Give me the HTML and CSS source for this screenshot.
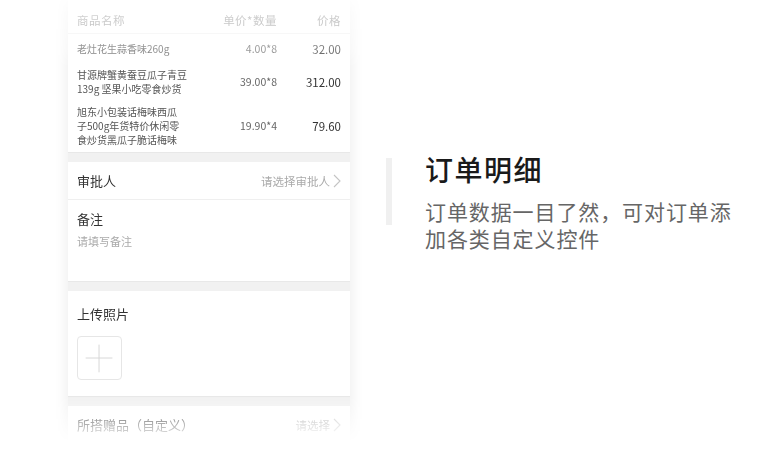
FILE: index.html
```html
<!DOCTYPE html>
<html lang="zh-CN">
<head>
<meta charset="utf-8">
<title>订单明细</title>
<link rel="stylesheet" href="styles.css">
</head>
<body>
<main class="page">
  <div class="mock">
    <div class="phone">
      <section class="card goods">
        <div class="grow head">
          <span class="c-name">商品名称</span>
          <span class="c-unit">单价*数量</span>
          <span class="c-price">价格</span>
        </div>
        <div class="grow item first">
          <span class="c-name">老灶花生蒜香味260g</span>
          <span class="c-unit">4.00*8</span>
          <span class="c-price">32.00</span>
        </div>
        <div class="grow item">
          <span class="c-name">甘源牌蟹黄蚕豆瓜子青豆<br>139g 坚果小吃零食炒货</span>
          <span class="c-unit">39.00*8</span>
          <span class="c-price">312.00</span>
        </div>
        <div class="grow item last">
          <span class="c-name">旭东小包装话梅味西瓜<br>子500g年货特价休闲零<br>食炒货黑瓜子脆话梅味</span>
          <span class="c-unit">19.90*4</span>
          <span class="c-price">79.60</span>
        </div>
      </section>
      <div class="gap"></div>
      <section class="card">
        <div class="line-row">
          <span class="label">审批人</span>
          <span class="pick">请选择审批人<svg class="chev" viewBox="0 0 8 14" width="8" height="14"><polyline points="1,1 7,7 1,13" fill="none" stroke="#c4c4c4" stroke-width="1.1"/></svg></span>
        </div>
        <div class="remark">
          <div class="label">备注</div>
          <div class="hint">请填写备注</div>
        </div>
      </section>
      <div class="gap"></div>
      <section class="card upload">
        <div class="label">上传照片</div>
        <div class="addbox">
          <svg viewBox="0 0 45 44" width="45" height="44"><line x1="8" y1="22" x2="36" y2="22" stroke="#d6d6d6" stroke-width="1"/><line x1="22" y1="8" x2="22" y2="37" stroke="#d6d6d6" stroke-width="1"/></svg>
        </div>
      </section>
      <div class="gap"></div>
      <section class="card">
        <div class="line-row">
          <span class="label">所搭赠品（自定义）</span>
          <span class="pick">请选择<svg class="chev" viewBox="0 0 8 14" width="8" height="14"><polyline points="1,1 7,7 1,13" fill="none" stroke="#c4c4c4" stroke-width="1.1"/></svg></span>
        </div>
        <div class="filler"></div>
      </section>
    </div>
  </div>
  <div class="intro">
    <div class="bar"></div>
    <div class="texts">
      <h1 class="title">订单明细</h1>
      <p class="desc"><span class="dl">订单数据一目了然，可对订单添</span><span class="dl">加各类自定义控件</span></p>
    </div>
  </div>
</main>
</body>
</html>
```

FILE: styles.css
```css
* { box-sizing: border-box; }
html, body {
  margin: 0;
  padding: 0;
  background: #fff;
}
body {
  font-family: "Noto Sans CJK SC", "Noto Sans", sans-serif;
  color: #333;
  width: 770px;
  height: 454px;
  overflow: hidden;
}
.page {
  display: flex;
  align-items: flex-start;
  height: 454px;
}
.mock {
  margin-left: 50px;
  padding: 0 18px;
  height: 454px;
  overflow: hidden;
  -webkit-mask-image: linear-gradient(to bottom, rgba(0,0,0,.25) 0, rgba(0,0,0,.45) 22px, rgba(0,0,0,.65) 50px, #000 68px, #000 396px, rgba(0,0,0,0) 442px);
  mask-image: linear-gradient(to bottom, rgba(0,0,0,.25) 0, rgba(0,0,0,.45) 22px, rgba(0,0,0,.65) 50px, #000 68px, #000 396px, rgba(0,0,0,0) 442px);
}
.phone {
  width: 282px;
  background: #f2f2f2;
  box-shadow: 0 0 14px rgba(0,0,0,.09);
}
.card {
  background: #fff;
}
.gap {
  height: 10px;
  background: #f1f1f1;
  border-top: 1px solid #e8e8e8;
}

/* goods table */
.grow {
  display: grid;
  grid-template-columns: 1fr 80px 64px;
  align-items: center;
  padding: 0 9px;
}
.grow .c-unit, .grow .c-price { text-align: right; white-space: nowrap; }
.head {
  height: 34px;
  padding-top: 6px;
  border-bottom: 1px solid #f0f0f0;
  font-size: 11.5px;
  color: #888;
  letter-spacing: .5px;
}
.item {
  padding-top: 4px;
  padding-bottom: 4px;
  line-height: 14px;
}
.item.first { padding-top: 8px; padding-bottom: 8px; }
.item.last { padding-top: 5px; padding-bottom: 5px; }
.item .c-name {
  font-size: 10px;
  color: #555;
  white-space: nowrap;
}
.item .c-unit {
  font-size: 10.5px;
  color: #666;
}
.item .c-price {
  font-size: 11.5px;
  color: #333;
}

/* form */
.line-row {
  height: 38px;
  padding: 0 9px;
  display: flex;
  align-items: center;
  justify-content: space-between;
  border-bottom: 1px solid #efefef;
}
.label {
  font-size: 13px;
  color: #333;
}
.pick {
  display: flex;
  align-items: center;
  gap: 3px;
  font-size: 11.5px;
  color: #aaa;
}
.chev { display: block; }
.remark {
  height: 81px;
  padding: 10px 9px 0;
}
.remark .label { line-height: 18px; }
.hint {
  margin-top: 4px;
  font-size: 11px;
  color: #aaa;
  line-height: 18px;
}
.upload {
  height: 105px;
  padding: 13px 9px 0;
}
.upload .label { line-height: 19px; }
.addbox {
  margin-top: 13px;
  width: 45px;
  height: 44px;
  border: 1px solid #e6e6e6;
  border-radius: 4px;
  display: flex;
  align-items: center;
  justify-content: center;
  overflow: hidden;
}
.addbox svg { display: block; }
.filler { height: 60px; }

/* right intro */
.intro {
  margin-left: 18px;
  margin-top: 158px;
  display: flex;
  align-items: flex-start;
}
.bar {
  width: 6px;
  height: 67px;
  background: #f0f0f0;
}
.texts {
  margin-left: 33px;
  margin-top: -5px;
}
.title {
  margin: 0;
  font-size: 28px;
  font-weight: 500;
  line-height: 32px;
  color: #1a1a1a;
  letter-spacing: 1.5px;
}
.desc {
  margin: 13px 0 0;
  font-size: 21px;
  color: #666;
  white-space: nowrap;
  letter-spacing: .9px;
}
.dl {
  display: block;
  height: 27px;
  line-height: 27px;
}
```
